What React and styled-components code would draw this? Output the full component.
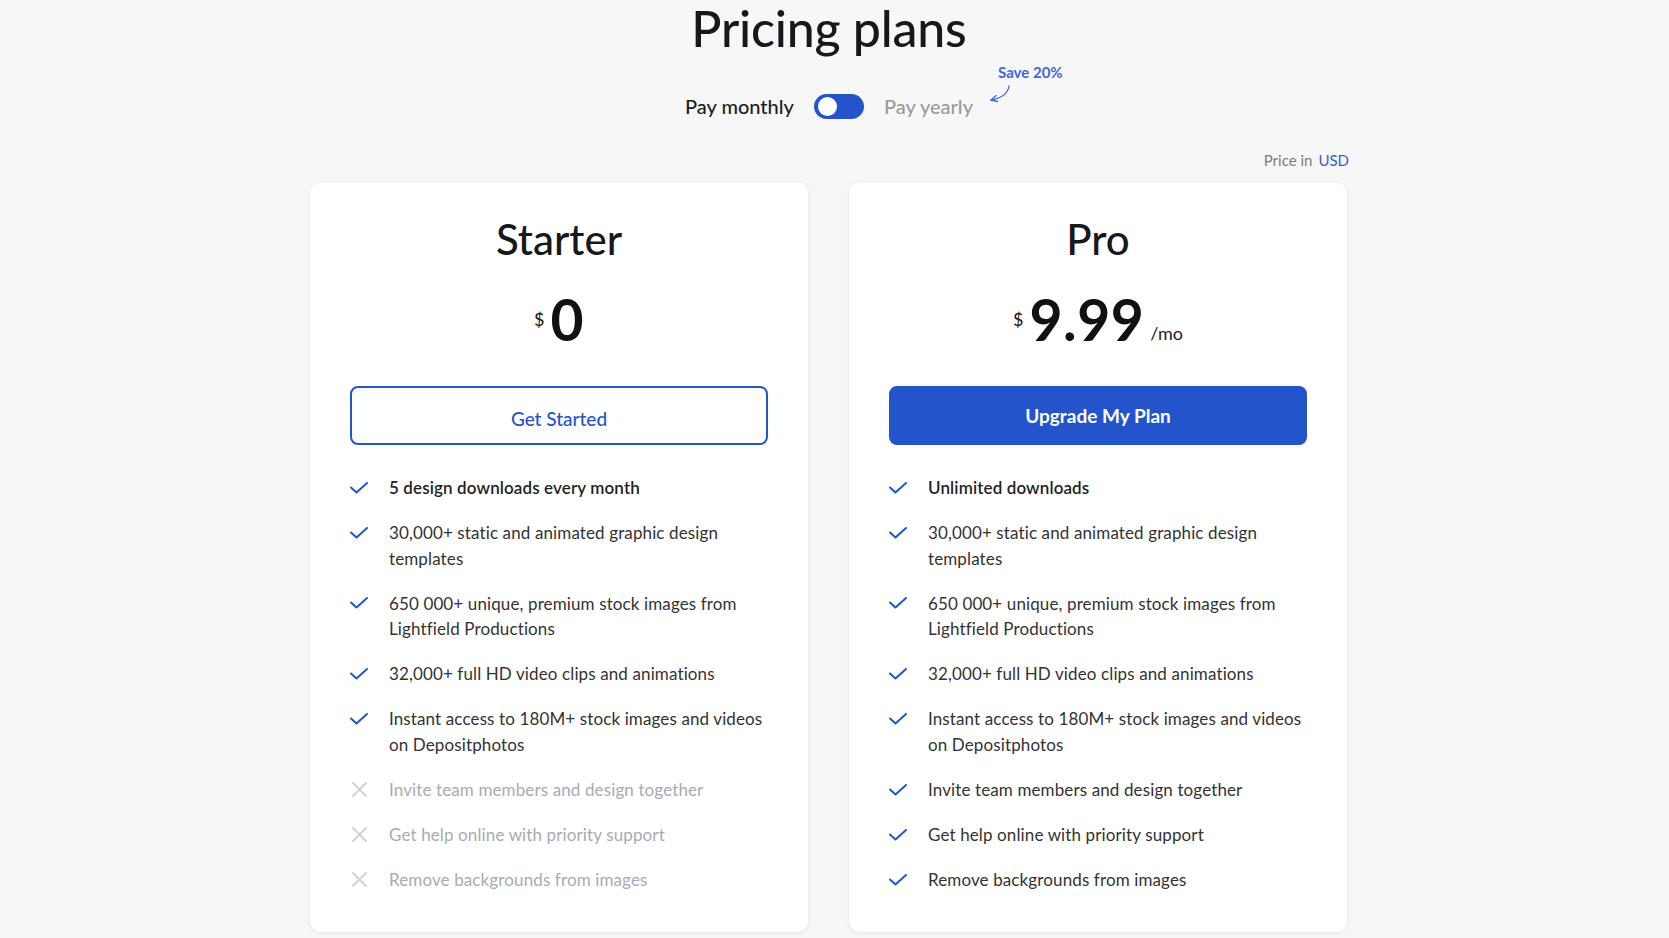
import React from "react";
import styled, { createGlobalStyle } from "styled-components";

const GlobalStyle = createGlobalStyle`
  * { box-sizing: border-box; }
  html, body {
    margin: 0;
    padding: 0;
    background: #f7f7f7;
    font-family: "Lato", "Noto Sans", sans-serif;
    color: #222;
  }
`;

const Page = styled.main`
  display: flex;
  flex-direction: column;
  align-items: center;
  padding-right: 11px;
  min-height: 938px;
`;

const Title = styled.h1`
  margin: 0;
  font-size: 50px;
  line-height: 56px;
  font-weight: 500;
  color: #17171c;
  letter-spacing: -0.2px;
`;

const BillingRow = styled.div`
  display: flex;
  align-items: center;
  gap: 20px;
  margin-top: 37px;
  height: 26px;
`;

const BillingLabel = styled.span`
  position: relative;
  font-size: 20px;
  line-height: 26px;
  font-weight: 500;
  color: ${(p) => (p.$active ? "#1d1d22" : "#9a9a9a")};
`;

const Switch = styled.button`
  position: relative;
  width: 50px;
  height: 25px;
  border: none;
  border-radius: 13px;
  background: #2354cc;
  padding: 0;
  cursor: pointer;

  &::after {
    content: "";
    position: absolute;
    top: 3px;
    left: 4px;
    width: 19px;
    height: 19px;
    border-radius: 50%;
    background: #fff;
  }
`;

const SaveBadge = styled.div`
  position: absolute;
  left: calc(100% + 15px);
  top: -30px;
  width: 90px;
  height: 45px;
`;

const SaveText = styled.span`
  display: block;
  margin-left: 10px;
  font-size: 15px;
  line-height: 18px;
  font-weight: 700;
  color: #3d69dc;
  white-space: nowrap;
`;

const SaveArrow = styled.svg`
  position: absolute;
  left: 0;
  top: 22px;
`;

const Content = styled.section`
  width: 1040px;
  margin-top: 31px;
  display: flex;
  flex-direction: column;
`;

const CurrencyNote = styled.div`
  align-self: flex-end;
  font-size: 15px;
  line-height: 20px;
  color: #7b7b7b;

  span {
    color: #2f62d8;
    margin-left: 6px;
  }
`;

const Cards = styled.div`
  display: flex;
  gap: 39px;
  margin-top: 11px;
`;

const Card = styled.article`
  width: 500px;
  background: #fff;
  border: 1px solid #efefef;
  border-radius: 12px;
  box-shadow: 0 1px 3px rgba(0, 0, 0, 0.05);
  padding: 32px 40px 39px;
  display: flex;
  flex-direction: column;
  align-items: center;
`;

const PlanName = styled.h2`
  margin: 0;
  font-size: 42px;
  line-height: 50px;
  font-weight: 500;
  color: #17171c;
`;

const PriceRow = styled.div`
  display: flex;
  align-items: flex-start;
  margin-top: 23px;
  height: 64px;
  color: #111;
`;

const Currency = styled.span`
  font-size: 18px;
  line-height: 20px;
  margin-top: 22px;
  margin-right: 6px;
`;

const Amount = styled.span`
  font-size: 57px;
  line-height: 64px;
  font-weight: 700;
  letter-spacing: 0.5px;
`;

const Period = styled.span`
  font-size: 18px;
  line-height: 20px;
  margin-top: 36px;
  margin-left: 6px;
  color: #222;
`;

const ActionButton = styled.button`
  width: 100%;
  height: 59px;
  margin-top: 35px;
  border-radius: 8px;
  border: 2px solid #2354cc;
  background: ${(p) => (p.$primary ? "#2354cc" : "#fff")};
  color: ${(p) => (p.$primary ? "#fff" : "#2354cc")};
  font-family: inherit;
  font-size: 19px;
  font-weight: ${(p) => (p.$primary ? 700 : 500)};
  cursor: pointer;
  padding: 0;
  padding-top: ${(p) => (p.$primary ? "0" : "5px")};
`;

const FeatureList = styled.ul`
  list-style: none;
  margin: 30px 0 0;
  padding: 0;
  width: 100%;
  display: flex;
  flex-direction: column;
  gap: 19.6px;
`;

const Feature = styled.li`
  display: flex;
  align-items: flex-start;
  font-size: 17px;
  line-height: 25.5px;
  letter-spacing: 0.12px;
  font-weight: ${(p) => (p.$strong ? 600 : 400)};
  color: ${(p) => (p.$off ? "#a8abb3" : p.$strong ? "#1f1f24" : "#333")};
`;

const IconBox = styled.span`
  flex: 0 0 18px;
  height: 25.5px;
  margin-right: 21px;
  display: flex;
  align-items: center;
  justify-content: center;
`;

const Check = () => (
  <svg width="18" height="12" viewBox="0 0 18 12" fill="none">
    <polyline points="1,5.5 6.5,10.5 17,1" stroke="#2354cc" strokeWidth="2" strokeLinecap="round" strokeLinejoin="round" />
  </svg>
);

const Cross = () => (
  <svg width="15" height="15" viewBox="0 0 15 15" fill="none">
    <path d="M1 1 L14 14 M14 1 L1 14" stroke="#ccd0d9" strokeWidth="1.8" strokeLinecap="round" />
  </svg>
);

const commonFeatures = [
  "30,000+ static and animated graphic design templates",
  "650 000+ unique, premium stock images from Lightfield Productions",
  "32,000+ full HD video clips and animations",
  "Instant access to 180M+ stock images and videos on Depositphotos",
];

const extraFeatures = [
  "Invite team members and design together",
  "Get help online with priority support",
  "Remove backgrounds from images",
];

const plans = [
  {
    name: "Starter",
    amount: "0",
    action: "Get Started",
    headline: "5 design downloads every month",
    extras: false,
  },
  {
    name: "Pro",
    amount: "9.99",
    period: "/mo",
    action: "Upgrade My Plan",
    primary: true,
    headline: "Unlimited downloads",
    extras: true,
  },
];

const PlanCard = ({ plan }) => (
  <Card>
    <PlanName>{plan.name}</PlanName>
    <PriceRow>
      <Currency>$</Currency>
      <Amount>{plan.amount}</Amount>
      {plan.period && <Period>{plan.period}</Period>}
    </PriceRow>
    <ActionButton $primary={plan.primary}>{plan.action}</ActionButton>
    <FeatureList>
      <Feature $strong>
        <IconBox>
          <Check />
        </IconBox>
        {plan.headline}
      </Feature>
      {commonFeatures.map((text) => (
        <Feature key={text}>
          <IconBox>
            <Check />
          </IconBox>
          {text}
        </Feature>
      ))}
      {extraFeatures.map((text) => (
        <Feature key={text} $off={!plan.extras}>
          <IconBox>{plan.extras ? <Check /> : <Cross />}</IconBox>
          {text}
        </Feature>
      ))}
    </FeatureList>
  </Card>
);

const App = () => {
  return (
    <>
      <GlobalStyle />
      <Page>
        <Title>Pricing plans</Title>
        <BillingRow>
          <BillingLabel $active>Pay monthly</BillingLabel>
          <Switch aria-label="Toggle billing period" />
          <BillingLabel>
            Pay yearly
            <SaveBadge>
              <SaveText>Save 20%</SaveText>
              <SaveArrow width="26" height="20" viewBox="0 0 26 20" fill="none">
                <path d="M21 1 C 20 8, 14 13, 3 15" stroke="#3d69dc" strokeWidth="1.3" strokeLinecap="round" />
                <path d="M8 10.5 L3 15 L9.5 16.5" stroke="#3d69dc" strokeWidth="1.3" strokeLinecap="round" strokeLinejoin="round" />
              </SaveArrow>
            </SaveBadge>
          </BillingLabel>
        </BillingRow>
        <Content>
          <CurrencyNote>
            Price in<span>USD</span>
          </CurrencyNote>
          <Cards>
            {plans.map((plan) => (
              <PlanCard key={plan.name} plan={plan} />
            ))}
          </Cards>
        </Content>
      </Page>
    </>
  );
};

export default App;
